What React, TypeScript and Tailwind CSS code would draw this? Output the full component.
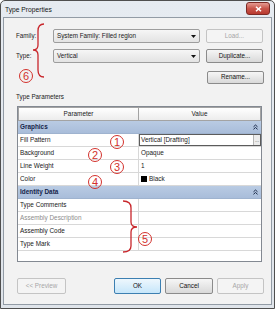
import React from "react";

function Circ({ n, x, y }: { n: string; x: number; y: number }) {
  return (
    <div
      className="absolute w-[14px] h-[14px] rounded-full border border-[#d3312c] text-[#d3312c] text-[11px] leading-none flex items-center justify-center"
      style={{ left: x - 7, top: y - 7 }}
    >
      {n}
    </div>
  );
}

function Collapse() {
  return (
    <svg width="5" height="6" viewBox="0 0 5 6" className="mr-[3px]">
      <polyline points="0.5,2.8 2.5,1 4.5,2.8" fill="none" stroke="#1b2a48" strokeWidth="1" />
      <polyline points="0.5,5.3 2.5,3.5 4.5,5.3" fill="none" stroke="#1b2a48" strokeWidth="1" />
    </svg>
  );
}

function Combo({ text }: { text: string }) {
  return (
    <div className="w-[147px] h-full border border-[#9d9d9d] rounded-[2px] bg-gradient-to-b from-[#f6f6f6] to-[#e3e3e3] flex items-center justify-between pl-[3px] pr-[3px]">
      <span className="text-[6.3px] leading-none">{text}</span>
      <svg width="5" height="3" viewBox="0 0 5 3">
        <polygon points="0,0 5,0 2.5,3" fill="#111" />
      </svg>
    </div>
  );
}

function Btn({
  label,
  w,
  disabled,
  def,
}: {
  label: string;
  w: string;
  disabled?: boolean;
  def?: boolean;
}) {
  let cls =
    "h-full rounded-[2px] border flex items-center justify-center text-[6.3px] leading-none ";
  if (disabled) cls += "border-[#c4c4c4] bg-[#f4f4f4] text-[#a6a6a6]";
  else if (def) cls += "border-[#3c7fb1] bg-gradient-to-b from-[#eef7fd] to-[#c6e6fa] text-[#111]";
  else cls += "border-[#8b8b8b] bg-gradient-to-b from-[#f6f6f6] to-[#d9d9d9] text-[#111]";
  return <div className={cls + " " + w}>{label}</div>;
}

function Row({
  label,
  value,
  gray,
}: {
  label: string;
  value?: React.ReactNode;
  gray?: boolean;
}) {
  return (
    <div className="h-[13px] flex border-b border-[#d8d8d8] bg-white">
      <div
        className={
          "w-[121px] border-r border-[#d8d8d8] pl-[2px] flex items-center text-[6.4px] leading-none " +
          (gray ? "text-[#8c8c8c]" : "text-[#1a1a1a]")
        }
      >
        {label}
      </div>
      <div className="flex-1 flex items-center pl-[2px] text-[6.4px] leading-none text-[#1a1a1a]">
        {value}
      </div>
    </div>
  );
}

function Band({ label }: { label: string }) {
  return (
    <div className="h-[13px] flex items-center justify-between bg-gradient-to-b from-[#b9cbe3] to-[#a9bdda] border-b border-[#9fb3cf] pl-[2px]">
      <span className="text-[6.4px] leading-none font-bold text-[#16244a]">{label}</span>
      <Collapse />
    </div>
  );
}

export default function App() {
  return (
    <div className="relative w-[276px] h-[311px] bg-white font-['Liberation_Sans',Arial,sans-serif] text-[#1a1a1a]">
      <div className="w-[275px] h-[309px] border border-[#4f4f4f] rounded-t-[5px] bg-gradient-to-b from-[#e6ebf1] to-[#dfe4ea] flex flex-col">
        {/* title bar */}
        <div className="h-[16px] flex items-start justify-between pl-[4px] pr-[4px]">
          <span className="mt-[6px] text-[6.7px] leading-none text-[#151515]">Type Properties</span>
          <div className="mt-[1px] w-[24px] h-[13px] rounded-[3px] border border-[#7c2a25] bg-gradient-to-b from-[#e49a92] via-[#c9554b] to-[#b8392f] flex items-center justify-center">
            <svg width="7" height="6" viewBox="0 0 7 6">
              <line x1="1" y1="0.8" x2="6" y2="5.2" stroke="#fff" strokeWidth="1.5" />
              <line x1="6" y1="0.8" x2="1" y2="5.2" stroke="#fff" strokeWidth="1.5" />
            </svg>
          </div>
        </div>
        {/* client */}
        <div className="flex-1 mx-[2px] mb-[3px] border border-[#929ba5] bg-[#f2f2f2] flex flex-col pl-[12px] pr-[7px]">
          <div className="mt-[11px] h-[14px] flex items-center">
            <span className="w-[37px] text-[6.3px] leading-none">Family:</span>
            <Combo text="System Family: Filled region" />
            <div className="ml-[6px] h-full">
              <Btn label="Load..." w="w-[57px]" disabled />
            </div>
          </div>
          <div className="mt-[6px] h-[14px] flex items-center">
            <span className="w-[37px] text-[6.3px] leading-none">Type:</span>
            <Combo text="Vertical" />
            <div className="ml-[6px] h-full">
              <Btn label="Duplicate..." w="w-[57px]" />
            </div>
          </div>
          <div className="mt-[8px] h-[13px] flex justify-end">
            <Btn label="Rename..." w="w-[57px]" />
          </div>
          <div className="mt-[9px] h-[8px] flex items-center text-[6.3px] leading-none">Type Parameters</div>
          {/* table */}
          <div className="mt-[5px] ml-[1px] w-[245px] h-[156px] border border-[#838992] bg-white flex flex-col">
            <div className="h-[14px] flex">
              <div className="w-[121px] border border-[#a3a3a3] bg-gradient-to-b from-[#ffffff] to-[#ececec] flex items-center justify-center text-[6.4px] leading-none">
                Parameter
              </div>
              <div className="flex-1 border border-l-0 border-[#a3a3a3] bg-gradient-to-b from-[#ffffff] to-[#ececec] flex items-center justify-center text-[6.4px] leading-none">
                Value
              </div>
            </div>
            <Band label="Graphics" />
            <div className="h-[13px] flex border-b border-[#d8d8d8] bg-white">
              <div className="w-[121px] border-r border-[#d8d8d8] pl-[2px] flex items-center text-[6.4px] leading-none">
                Fill Pattern
              </div>
              <div className="flex-1 flex border border-[#5c5c5c] bg-white">
                <div className="flex-1 flex items-center pl-[1px] text-[6.4px] leading-none">Vertical [Drafting]</div>
                <div className="w-[7px] border-l border-[#b5b5b5] bg-[#ececec] flex items-center justify-center">
                  <span className="text-[5px] leading-none text-[#444]">...</span>
                </div>
              </div>
            </div>
            <Row label="Background" value="Opaque" />
            <Row label="Line Weight" value="1" />
            <Row
              label="Color"
              value={
                <span className="flex items-center gap-[2px]">
                  <span className="inline-block w-[6px] h-[6px] bg-black"></span>
                  <span>Black</span>
                </span>
              }
            />
            <Band label="Identity Data" />
            <Row label="Type Comments" />
            <Row label="Assembly Description" gray />
            <Row label="Assembly Code" />
            <Row label="Type Mark" />
          </div>
          {/* bottom buttons */}
          <div className="mt-[16px] h-[16px] flex items-center ml-[1px]">
            <div className="h-full">
              <Btn label="<< Preview" w="w-[49px]" disabled />
            </div>
            <div className="flex-1" />
            <div className="h-full">
              <Btn label="OK" w="w-[47px]" def />
            </div>
            <div className="h-full ml-[4px]">
              <Btn label="Cancel" w="w-[48px]" />
            </div>
            <div className="h-full ml-[4px]">
              <Btn label="Apply" w="w-[47px]" disabled />
            </div>
          </div>
        </div>
      </div>

      {/* annotations */}
      <svg className="absolute left-0 top-0 pointer-events-none" width="276" height="311" viewBox="0 0 276 311">
        <path
          d="M44,24 C39.5,24 38,27 38,31 L38,45 C38,48.5 36.5,50 33,50 C36.5,50 38,52 38,55 L38,70 C38,74 39.5,77 44,77"
          fill="none"
          stroke="#c8262b"
          strokeWidth="1.3"
        />
        <path
          d="M123,201 C129,201 131,204 131,208 L131,222 C131,225.5 133,227 137,227 C133,227 131,229 131,232 L131,246 C131,250 129,252 123,252"
          fill="none"
          stroke="#c8262b"
          strokeWidth="1.3"
        />
      </svg>
      <Circ n="1" x={117} y={142} />
      <Circ n="2" x={95} y={155} />
      <Circ n="3" x={117} y={167} />
      <Circ n="4" x={95} y={182} />
      <Circ n="5" x={145} y={239} />
      <Circ n="6" x={26} y={76} />
    </div>
  );
}
